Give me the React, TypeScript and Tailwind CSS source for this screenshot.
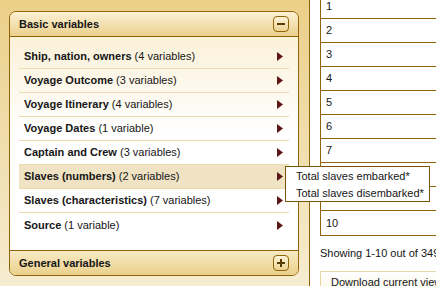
import React from "react";

const brown = "border-[#8f6508]";

const groups = [
  { name: "Ship, nation, owners", count: "4 variables" },
  { name: "Voyage Outcome", count: "3 variables" },
  { name: "Voyage Itinerary", count: "4 variables" },
  { name: "Voyage Dates", count: "1 variable" },
  { name: "Captain and Crew", count: "3 variables" },
  { name: "Slaves (numbers)", count: "2 variables", active: true },
  { name: "Slaves (characteristics)", count: "7 variables" },
  { name: "Source", count: "1 variable" },
];

const Arrow = () => (
  <svg width="6" height="9" viewBox="0 0 6 9" className="shrink-0">
    <path d="M0 0L6 4.5L0 9Z" fill="#5b1616" />
  </svg>
);

const ToggleButton = ({ plus }: { plus?: boolean }) => (
  <div className="relative w-[16px] h-[16px] rounded-[4px] border border-[#8f6508] bg-linear-to-b from-[#fdf4da] to-[#ecd290] flex items-center justify-center">
    <div className="w-[8px] h-[2px] bg-[#5a3d06]" />
    {plus && <div className="absolute w-[2px] h-[8px] bg-[#5a3d06]" />}
  </div>
);

export default function App() {
  return (
    <div
      className="relative w-[436px] h-[286px] overflow-hidden bg-white flex text-[11px] text-[#161616]"
      style={{ fontFamily: '"Liberation Sans", Arial, sans-serif' }}
    >
      {/* sidebar */}
      <div className={`w-[310px] shrink-0 h-full border-r ${brown} bg-linear-to-b from-[#ebcf88] to-[#f6ecd0] pl-[9px] pt-[11px]`}>
        <div className={`w-[290px] border ${brown} rounded-[7px] overflow-hidden`}>
          <div className={`h-[25px] border-b ${brown} bg-linear-to-b from-[#fcf1d5] to-[#ebd08b] flex items-center justify-between pl-[9px] pr-[9px]`}>
            <span className="font-bold">Basic variables</span>
            <ToggleButton />
          </div>
          <div className="bg-linear-to-b from-[#fbf1d8] via-white via-[45%] to-white pt-[8px] pb-[13px] px-[9px]">
            {groups.map((g, i) => (
              <div
                key={g.name}
                className={`h-[24px] flex items-center justify-between pl-[5px] pr-[6px] ${
                  i < groups.length - 1 ? "border-b border-[#ecdcae]" : ""
                } ${g.active ? "bg-[#efe3c4]" : ""}`}
              >
                <span>
                  <span className="font-bold">{g.name}</span> ({g.count})
                </span>
                <Arrow />
              </div>
            ))}
          </div>
          <div className={`h-[25px] border-t ${brown} bg-linear-to-b from-[#f8eac4] to-[#ebd08b] flex items-center justify-between pl-[9px] pr-[9px]`}>
            <span className="font-bold">General variables</span>
            <ToggleButton plus />
          </div>
        </div>
      </div>

      {/* results */}
      <div className="pl-[10px] flex-1">
        <div className={`-mt-[5px] w-[200px] border-x border-b ${brown}`}>
          {Array.from({ length: 10 }, (_, i) => (
            <div
              key={i}
              className={`h-[24px] flex items-center pl-[5px] ${i < 9 ? `border-b ${brown}` : ""}`}
            >
              {i + 1}
            </div>
          ))}
        </div>
        <div className="mt-[10px] leading-[14px] whitespace-nowrap">Showing 1-10 out of 349</div>
        <div className="mt-[11px] w-[160px] h-[24px] border border-[#e6d6a6] bg-linear-to-b from-white to-[#fbf5e4] pl-[10px] pt-[2px] whitespace-nowrap">
          Download current view
        </div>
      </div>

      {/* popup */}
      <div className="absolute left-[285px] top-[166px] w-[145px] h-[36px] border border-[#7a5408] bg-white pl-[10px] leading-[17px] pt-[1px]">
        <div>Total slaves embarked*</div>
        <div>Total slaves disembarked*</div>
      </div>
    </div>
  );
}
